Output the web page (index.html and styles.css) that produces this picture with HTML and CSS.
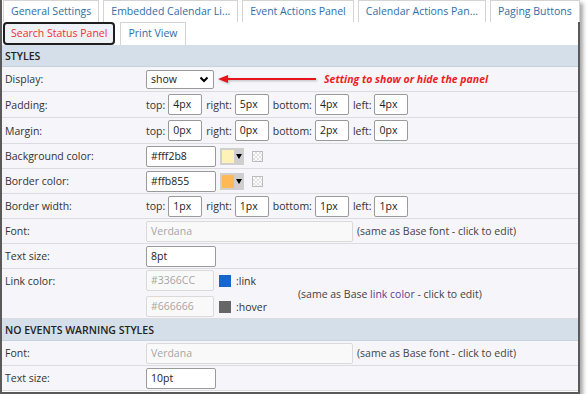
FILE: index.html
```html
<!DOCTYPE html>
<html>
<head>
<meta charset="utf-8">
<link rel="stylesheet" href="styles.css">
</head>
<body>
<div class="frame">
  <div class="tabs">
    <div class="tabrow">
      <div class="tab">General Settings</div>
      <div class="tab">Embedded Calendar Li...</div>
      <div class="tab">Event Actions Panel</div>
      <div class="tab">Calendar Actions Pan...</div>
      <div class="tab">Paging Buttons</div>
    </div>
    <div class="tabrow">
      <div class="tab active">Search Status Panel</div>
      <div class="tab">Print View</div>
    </div>
  </div>
  <div class="panel">
    <div class="sect">STYLES</div>
    <div class="row">
      <div class="lbl">Display:</div>
      <div class="val">
        <div class="select">show <svg width="10" height="7" viewBox="0 0 10 7"><path d="M1.5 1.5 L5 5 L8.5 1.5" fill="none" stroke="#000" stroke-width="2"/></svg></div>
      </div>
    </div>
    <div class="row r26">
      <div class="lbl">Padding:</div>
      <div class="val">
        <span class="k">top:</span><span class="inp sm">4px</span>
        <span class="k">right:</span><span class="inp sm">5px</span>
        <span class="k">bottom:</span><span class="inp sm">4px</span>
        <span class="k">left:</span><span class="inp sm">4px</span>
      </div>
    </div>
    <div class="row r26">
      <div class="lbl">Margin:</div>
      <div class="val">
        <span class="k">top:</span><span class="inp sm">0px</span>
        <span class="k">right:</span><span class="inp sm">0px</span>
        <span class="k">bottom:</span><span class="inp sm">2px</span>
        <span class="k">left:</span><span class="inp sm">0px</span>
      </div>
    </div>
    <div class="row">
      <div class="lbl">Background color:</div>
      <div class="val">
        <span class="inp md">#fff2b8</span>
        <span class="picker"><span class="sw bg1"></span><span class="tri"></span></span>
        <span class="clear"></span>
      </div>
    </div>
    <div class="row">
      <div class="lbl">Border color:</div>
      <div class="val">
        <span class="inp md">#ffb855</span>
        <span class="picker"><span class="sw bg2"></span><span class="tri"></span></span>
        <span class="clear"></span>
      </div>
    </div>
    <div class="row">
      <div class="lbl">Border width:</div>
      <div class="val">
        <span class="k">top:</span><span class="inp sm">1px</span>
        <span class="k">right:</span><span class="inp sm">1px</span>
        <span class="k">bottom:</span><span class="inp sm">1px</span>
        <span class="k">left:</span><span class="inp sm">1px</span>
      </div>
    </div>
    <div class="row">
      <div class="lbl">Font:</div>
      <div class="val">
        <span class="inp dis wide">Verdana</span>
        <span class="note">(same as Base font - click to edit)</span>
      </div>
    </div>
    <div class="row">
      <div class="lbl">Text size:</div>
      <div class="val"><span class="inp md">8pt</span></div>
    </div>
    <div class="row tall">
      <div class="lbl lbltop">Link color:</div>
      <div class="val">
        <div class="links">
          <div class="lk"><span class="inp dis md2">#3366CC</span><span class="sq blue"></span><span class="k">:link</span></div>
          <div class="lk"><span class="inp dis md2">#666666</span><span class="sq gray"></span><span class="k">:hover</span></div>
        </div>
        <span class="note">(same as Base <span class="lc">link color</span> - click to edit)</span>
      </div>
    </div>
    <div class="sect">NO EVENTS WARNING STYLES</div>
    <div class="row">
      <div class="lbl">Font:</div>
      <div class="val">
        <span class="inp dis wide">Verdana</span>
        <span class="note">(same as Base font - click to edit)</span>
      </div>
    </div>
    <div class="row">
      <div class="lbl">Text size:</div>
      <div class="val"><span class="inp md">10pt</span></div>
    </div>
  </div>
  <div class="callout">
    <svg class="arrow" width="100" height="10" viewBox="0 0 100 10"><path d="M8 5 H98" stroke="#e8141c" stroke-width="2"/><path d="M0 5 L10 1 L10 9 Z" fill="#e8141c"/></svg>
    <span class="ctext">Setting to show or hide the panel</span>
  </div>
</div>
</body>
</html>
```
FILE: styles.css
```css
* { box-sizing: border-box; }
body {
  margin: 0;
  background: #fff;
  font-family: "Open Sans", "DejaVu Sans", sans-serif;
  font-size: 10.5px;
  color: #333;
}
.frame {
  position: relative;
  width: 580px;
  height: 394px;
  background: #fff;
  border-left: 2px solid #5a5a5a;
  border-right: 2px solid #5a5a5a;
  border-bottom: 2px solid #5a5a5a;
  box-shadow: 3px 3px 4px rgba(0,0,0,0.35);
}
.tabs {
  padding: 0 0 0 1px;
}
.tabrow {
  display: flex;
  gap: 4px;
  height: 22px;
}
.tabrow + .tabrow { height: 23px; }
.tab {
  border: 1px solid #d4d4d4;
  border-bottom: none;
  background: #fff;
  color: #2f6ea8;
  padding: 0 7px;
  line-height: 21px;
  white-space: nowrap;
}
.tab.active {
  border: 2px solid #1e1e1e;
  border-radius: 4px;
  background: #eef1f5;
  color: #f03232;
  line-height: 19px;
  padding: 0 6px;
  margin-right: 1px;
}
.panel {
  background: #f5f5fa;
}
.sect {
  height: 22px;
  line-height: 22px;
  background: #d4dfe9;
  color: #222;
  padding-left: 3px;
  font-weight: 600;
  border-bottom: 1px solid #c8d2dc;
}
.row {
  display: flex;
  align-items: center;
  height: 25px;
  border-bottom: 1px solid #dcdce0;
}
.row.r26 { height: 26px; }
.row.tall { height: 50px; align-items: center; }
.lbl {
  width: 144px;
  padding-left: 3px;
  flex: none;
}
.lbltop { align-self: flex-start; padding-top: 5px; }
.val {
  display: flex;
  align-items: center;
}
.k { margin-right: 3px; }
.inp {
  display: inline-block;
  height: 21px;
  line-height: 19px;
  border: 1px solid #9a9a9a;
  border-radius: 2px;
  background: #fff;
  padding-left: 4px;
  color: #222;
  margin-right: 4px;
}
.inp.sm { width: 34px; }
.inp.md { width: 70px; }
.inp.md2 { width: 68px; }
.inp.wide { width: 207px; }
.inp.dis {
  border-color: #dadada;
  background: #f9f9f9;
  color: #a6a6a6;
}
.select {
  width: 68px;
  height: 19px;
  border: 1px solid #9a9a9a;
  border-radius: 2px;
  background: #fff;
  padding: 0 4px;
  display: flex;
  align-items: center;
  justify-content: space-between;
  color: #222;
}
.picker {
  width: 24px;
  height: 17px;
  background: #cfcfcf;
  display: inline-flex;
  align-items: center;
  padding-left: 2px;
}
.sw { width: 12px; height: 13px; }
.bg1 { background: #fff2b8; }
.bg2 { background: #ffb855; }
.tri {
  width: 0; height: 0;
  border-left: 3px solid transparent;
  border-right: 3px solid transparent;
  border-top: 5px solid #000;
  margin-left: 2px;
}
.clear {
  width: 11px;
  height: 11px;
  margin-left: 8px;
  border: 1px solid #bcbcbc;
  background:
    repeating-conic-gradient(#e2e2e2 0 25%, #fbfbfb 0 50%) 0 0 / 4px 4px;
}
.note { color: #444; }
.lc { color: #5b3f8c; }
.links { display: flex; flex-direction: column; gap: 5px; width: 152px; }
.lk { display: flex; align-items: center; }
.inp.md2 { margin-right: 5px; }
.sq { width: 12px; height: 12px; margin-right: 5px; }
.blue { background: #1566cf; }
.gray { background: #666; }
.callout {
  position: absolute;
  left: 216px;
  top: 72px;
  display: flex;
  align-items: center;
  gap: 6px;
}
.arrow { filter: drop-shadow(1px 1px 1px rgba(0,0,0,0.25)); }
.ctext {
  color: #f01c24;
  font-weight: bold;
  font-style: italic;
  font-size: 10.5px;
}
```
